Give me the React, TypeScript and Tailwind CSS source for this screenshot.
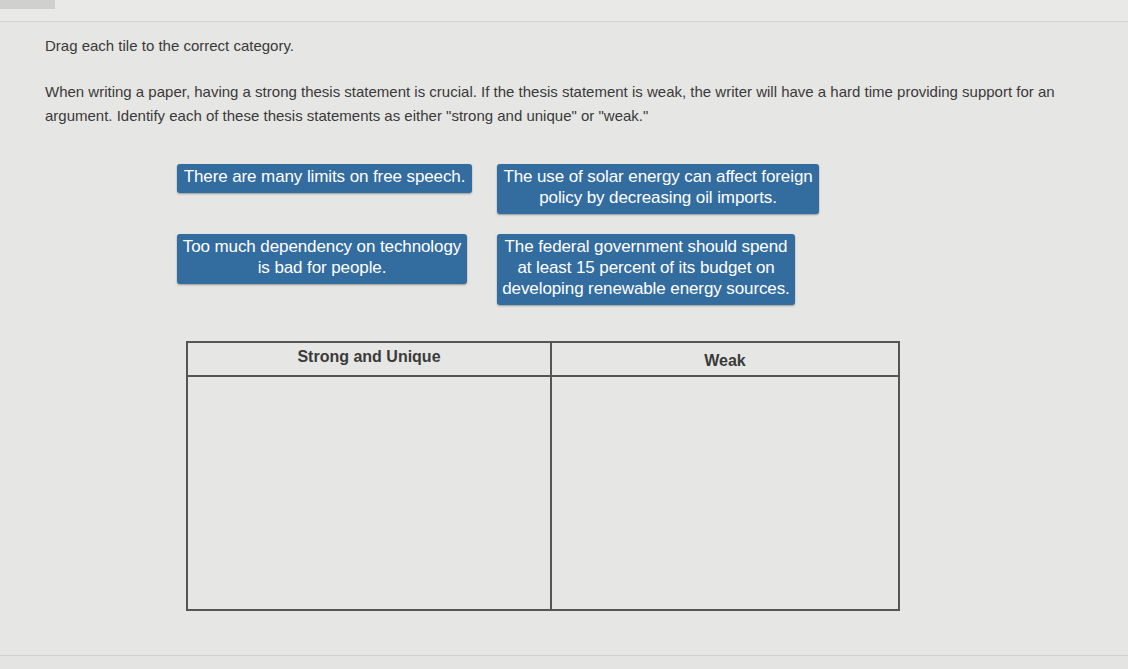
import React from "react";

const tiles = [
  { lines: ["There are many limits on free speech."], w: "w-[295px]" },
  { lines: ["The use of solar energy can affect foreign", "policy by decreasing oil imports."], w: "w-[322px]" },
  { lines: ["Too much dependency on technology", "is bad for people."], w: "w-[290px]" },
  {
    lines: ["The federal government should spend", "at least 15 percent of its budget on", "developing renewable energy sources."],
    w: "w-[298px]",
  },
];

const Tile = ({ lines, w }: { lines: string[]; w: string }) => (
  <div
    className={`${w} whitespace-nowrap rounded-[3px] bg-[#336c9f] pt-[2px] pb-[6px] text-center text-[17px] leading-[21px] tracking-[-0.1px] text-white shadow-[0_1px_2px_rgba(0,0,0,0.35)]`}
  >
    {lines.map((l, i) => (
      <div key={i}>{l}</div>
    ))}
  </div>
);

export default function App() {
  return (
    <div
      className="h-[669px] w-[1128px] overflow-hidden bg-[#e6e6e4] text-[#3a3a3a]"
      style={{ fontFamily: '"Liberation Sans", Arial, sans-serif' }}
    >
      {/* top strip */}
      <div className="flex h-[22px] border-b border-[#d2d2d0] bg-[#e9e9e7]">
        <div className="h-[9px] w-[55px] bg-[#d0d0ce]" />
      </div>

      <div className="px-[45px] pt-[14px]">
        <p className="text-[15px] leading-[20px]">Drag each tile to the correct category.</p>
        <p className="mt-[24px] text-[15px] leading-[24px]">
          When writing a paper, having a strong thesis statement is crucial. If the thesis statement is weak, the writer will have a hard time providing support for an
          argument. Identify each of these thesis statements as either "strong and unique" or "weak."
        </p>
      </div>

      <div className="ml-[177px] mt-[36px] grid grid-cols-[295px_322px] items-start gap-x-[25px] gap-y-[20px]">
        <Tile {...tiles[0]} />
        <Tile {...tiles[1]} />
        <Tile {...tiles[2]} />
        <Tile {...tiles[3]} />
      </div>

      <div className="ml-[186px] mt-[36px] w-[714px] border-2 border-[#555]">
        <div className="grid h-[34px] grid-cols-[364px_1fr] border-b-2 border-[#555] text-[16px] font-bold text-[#3a3a3a]">
          <div className="flex items-center justify-center border-r-2 border-[#555] pb-[4px]">Strong and Unique</div>
          <div className="flex items-center justify-center pt-[4px]">Weak</div>
        </div>
        <div className="grid h-[232px] grid-cols-[364px_1fr]">
          <div className="border-r-2 border-[#555]" />
          <div />
        </div>
      </div>

      <div className="mt-[44px] h-[20px] border-t border-[#cfcfcd] bg-[#e4e4e2]" />
    </div>
  );
}
